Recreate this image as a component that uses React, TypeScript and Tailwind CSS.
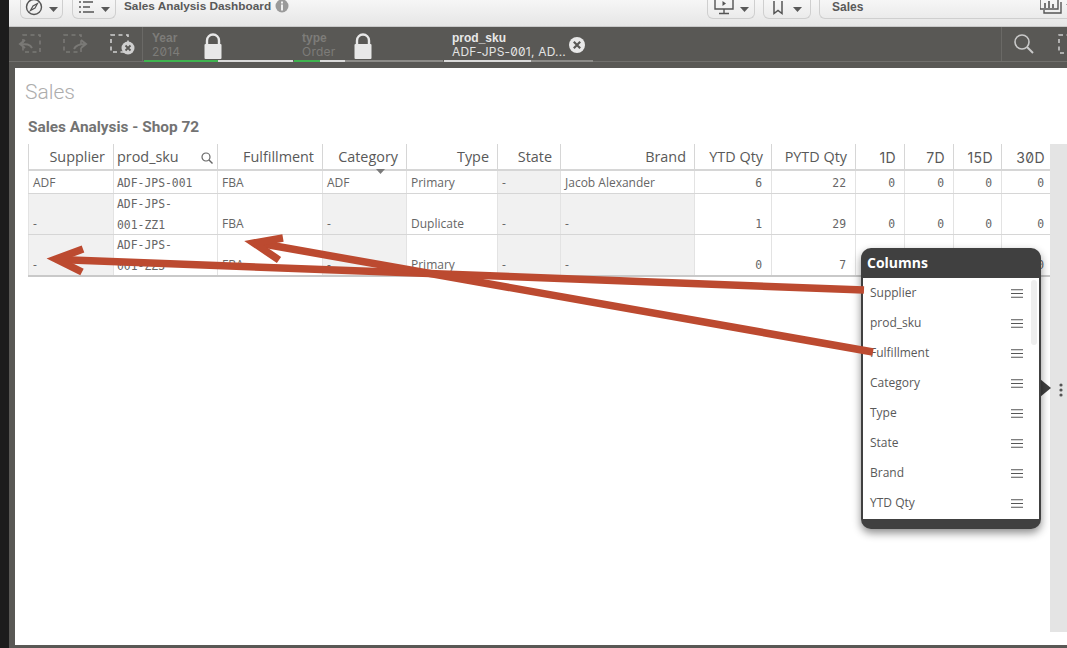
import React from "react";

const gridCols = "grid grid-cols-[85px_104px_105px_84px_91px_63px_134px_77px_84px_49px_49px_48px_48px] grid-rows-[minmax(0,1fr)]";
const headers = ["Supplier", "prod_sku", "Fulfillment", "Category", "Type", "State", "Brand", "YTD Qty", "PYTD Qty", "1D", "7D", "15D", "30D"];
const mono = "font-['DejaVu_Sans_Mono',monospace] text-[11.4px]";

type Row = { h: string; cells: string[] };
const rows: Row[] = [
  { h: "h-[23px]", cells: ["ADF", "ADF-JPS-001", "FBA", "ADF", "Primary", "-", "Jacob Alexander", "6", "22", "0", "0", "0", "0"] },
  { h: "h-[41px]", cells: ["-", "ADF-JPS-\n001-ZZ1", "FBA", "-", "Duplicate", "-", "-", "1", "29", "0", "0", "0", "0"] },
  { h: "h-[42px]", cells: ["-", "ADF-JPS-\n001-ZZ3", "FBA", "-", "Primary", "-", "-", "0", "7", "0", "0", "0", "0"] },
];

function Chevron({ className = "" }: { className?: string }) {
  return <svg width="9" height="5" viewBox="0 0 9 5" className={className}><path d="M0 0h9L4.5 5z" fill="#595959" /></svg>;
}

function Lock() {
  return (
    <svg width="18" height="27" viewBox="0 0 18 27" className="shrink-0">
      <path d="M3 12V7.5a6 6 0 0 1 12 0V12" fill="none" stroke="#e8e8e8" strokeWidth="2.4" />
      <rect x="0.5" y="11" width="17" height="15" rx="1" fill="#e8e8e8" />
    </svg>
  );
}

function Tile({ title, value, active, bar }: { title: string; value: string; active?: boolean; bar: [number, number] }) {
  return (
    <div className="relative w-[149px] h-[35px] shrink-0 ml-px pl-[8px] flex bg-[#595855]">
      <div className="w-[62px] pt-[4px] leading-[14px] text-[12px] overflow-hidden">
        <div className={`font-['Liberation_Sans',sans-serif] font-bold whitespace-nowrap ${active ? "text-[#e8e8e8]" : "text-[#7d7c79]"}`}>{title}</div>
      </div>
      <div className="flex h-[2px] absolute left-0 right-0 bottom-0 bg-[#8c8b88]">
        <div className="bg-[#3fb34f]" style={{ width: bar[0] }} />
        <div className="bg-[#d9d9d9]" style={{ width: bar[1] }} />
      </div>
      <div className={`absolute left-[8px] top-[18px] leading-[14px] text-[12px] tracking-[0.2px] slashed-zero font-['Inter',sans-serif] whitespace-nowrap ${active ? "text-[#e3e3e3]" : "text-[#7d7c79]"}`}>{value}</div>
      {active ? (
        <svg width="18" height="18" viewBox="0 0 18 18" className="absolute right-[7px] top-[9px]">
          <circle cx="9" cy="9" r="8" fill="#e8e8e8" />
          <path d="M5.8 5.8l6.4 6.4M12.2 5.8l-6.4 6.4" stroke="#595855" strokeWidth="2.2" />
        </svg>
      ) : (
        <div className="absolute left-[60px] top-[6px]"><Lock /></div>
      )}
    </div>
  );
}

function ToolButton({ children, className = "" }: { children: React.ReactNode; className?: string }) {
  return (
    <div className={`h-[19px] flex items-center justify-center gap-[6px] border border-t-0 border-[#cfcfcf] rounded-b-[6px] ${className}`}>
      {children}
    </div>
  );
}

function Hamburger() {
  return (
    <svg width="12" height="9" viewBox="0 0 12 9" className="shrink-0">
      <path d="M0 .75h12M0 4.5h12M0 8.25h12" stroke="#555" strokeWidth="1.1" />
    </svg>
  );
}

function Popover() {
  const items = headers.slice(0, 8);
  return (
    <div className="absolute left-[846px] top-[180px] w-[180px] z-10">
      <div className="w-[180px] h-[281px] rounded-[10px] bg-[#404040] shadow-[0_4px_8px_rgba(0,0,0,0.45)] px-[2px] flex flex-col">
        <div className="h-[30px] pl-[4px] pb-[2px] flex items-center text-white font-bold text-[14px] font-['Open_Sans',sans-serif]">Columns</div>
        <div className="relative h-[241px] bg-white overflow-hidden">
          <div className="absolute right-[2px] top-[2px] w-[6px] h-[65px] rounded-[3px] bg-[#eeeeee]" />
          {items.map((t) => (
            <div key={t} className="h-[30px] pl-[7px] pr-[16px] flex items-center justify-between text-[12px] text-[#595959] font-['Open_Sans',sans-serif]">
              <span>{t}</span>
              <Hamburger />
            </div>
          ))}
        </div>
      </div>
    </div>
  );
}

export default function App() {
  return (
    <div className="relative w-[1067px] h-[648px] overflow-hidden flex bg-[#1c1c1c] font-['Open_Sans',sans-serif]">
      <div className="w-[9px] shrink-0" />
      <div className="flex-1 flex flex-col min-w-0 bg-[#595855]">
        {/* top toolbar */}
        <div className="h-[27px] shrink-0 bg-gradient-to-b from-[#f6f6f6] to-[#e6e6e6] border-b border-[#c9c9c9] flex items-start overflow-hidden">
          <ToolButton className="ml-[11px] w-[43px]">
            <svg width="18" height="18" viewBox="0 0 18 18" className="-mt-[5px]">
              <circle cx="9" cy="9" r="7.5" fill="none" stroke="#555" strokeWidth="1.4" />
              <path d="M12.5 5.5L10 10l-4.5 2.5L8 8z" fill="none" stroke="#555" strokeWidth="1.2" />
            </svg>
            <Chevron />
          </ToolButton>
          <ToolButton className="ml-[9px] w-[44px]">
            <svg width="16" height="14" viewBox="0 0 16 14" className="-mt-[4px]">
              <path d="M0 2h2M4 2h10M0 7h2M4 7h7M0 12h2M4 12h11" stroke="#555" strokeWidth="1.6" />
            </svg>
            <Chevron />
          </ToolButton>
          <div className="ml-[8px] -mt-[1px] h-[14px] leading-[14px] text-[11.8px] font-bold text-[#595959] font-['Liberation_Sans',sans-serif] whitespace-nowrap">Sales Analysis Dashboard</div>
          <svg width="14" height="14" viewBox="0 0 14 14" className="ml-[4px] -mt-[1px]">
            <circle cx="7" cy="7" r="6.5" fill="#9a9a9a" />
            <rect x="6" y="5.5" width="2" height="6" fill="#f0f0f0" />
            <rect x="6" y="2.5" width="2" height="2" fill="#f0f0f0" />
          </svg>
          <ToolButton className="ml-[418px] w-[48px]">
            <svg width="20" height="19" viewBox="0 0 20 19" className="-mt-[6px]">
              <path d="M1 1h18v11H1zM10 12v4M5 16.5h10" fill="none" stroke="#555" strokeWidth="1.4" />
              <path d="M8.5 4l3.5 2.5L8.5 9z" fill="#555" />
            </svg>
            <Chevron />
          </ToolButton>
          <ToolButton className="ml-[8px] w-[48px]">
            <svg width="12" height="14" viewBox="0 0 12 14" className="-mt-[3px]">
              <path d="M2 0v12.5l4-3 4 3V0" fill="none" stroke="#555" strokeWidth="1.5" />
            </svg>
            <Chevron className="ml-[3px]" />
          </ToolButton>
          <ToolButton className="ml-[8px] flex-1 !justify-between !border-r-0 !rounded-br-none pl-[12px]">
            <span className="text-[12px] font-bold text-[#595959] font-['Liberation_Sans',sans-serif] -mt-[4px]">Sales</span>
            <div className="flex items-center -mt-[6px] -mr-[8px] gap-[2px]">
              <svg width="24" height="15" viewBox="0 0 24 15">
                <path d="M0 0v10h18V0M4 11v3h17V3" fill="none" stroke="#555" strokeWidth="1.4" />
                <path d="M5 9V4M9 9V2M13 9V5" stroke="#555" strokeWidth="1.6" />
              </svg>
              <Chevron />
            </div>
          </ToolButton>
        </div>

        {/* selection bar */}
        <div className="h-[35px] shrink-0 flex border-b border-[#706f6c]">
          <div className="w-[134px] shrink-0 flex items-center pl-[8px] gap-[24px] border-r border-[#6a6966]">
            <svg width="26" height="22" viewBox="0 0 26 22">
              <rect x="6" y="2" width="17" height="17" fill="none" stroke="#7a7976" strokeWidth="1.6" strokeDasharray="4 3.5" />
              <path d="M15 15c-2-4-6-4-11-4m4-4l-5 4 5 4" fill="none" stroke="#7a7976" strokeWidth="2" />
            </svg>
            <svg width="26" height="22" viewBox="0 0 26 22" className="-ml-[4px]">
              <rect x="1" y="2" width="17" height="17" fill="none" stroke="#7a7976" strokeWidth="1.6" strokeDasharray="4 3.5" />
              <path d="M11 16c2-4 6-5 11-5m-4-4l5 4-5 4" fill="none" stroke="#7a7976" strokeWidth="2" />
            </svg>
            <svg width="25" height="22" viewBox="0 0 25 22" className="-ml-[3px]">
              <rect x="1" y="2" width="17" height="17" fill="none" stroke="#d0d0d0" strokeWidth="1.6" strokeDasharray="4 3.5" />
              <circle cx="18" cy="15" r="6.5" fill="#d0d0d0" />
              <path d="M15.5 12.5l5 5M20.5 12.5l-5 5" stroke="#595855" strokeWidth="1.8" />
            </svg>
          </div>
          <Tile title="Year" value="2014" bar={[74, 75]} />
          <Tile title="type" value="Order" bar={[26, 25]} />
          <Tile title="prod_sku" value="ADF-JPS-001, AD..." active bar={[0, 87]} />
          <div className="flex-1" />
          <div className="w-[66px] shrink-0 border-l border-[#6a6966] flex items-center pl-[11px] gap-[23px] overflow-hidden">
            <svg width="22" height="22" viewBox="0 0 22 22" className="shrink-0">
              <circle cx="9" cy="9" r="7" fill="none" stroke="#c9c9c9" strokeWidth="1.6" />
              <path d="M14 14l6 6" stroke="#c9c9c9" strokeWidth="2" />
            </svg>
            <svg width="16" height="20" viewBox="0 0 16 20" className="shrink-0">
              <rect x="1" y="1" width="16" height="18" fill="none" stroke="#c9c9c9" strokeWidth="1.6" strokeDasharray="4 3.5" />
            </svg>
          </div>
        </div>
        <div className="h-[6px] shrink-0" />

        {/* sheet */}
        <div className="relative flex-1 ml-[6px] mb-[3px] bg-white flex flex-col">
          <div className="pl-[10px] pt-[12px] h-[45px] text-[21px] leading-[25px] text-[#adadad] font-['Roboto',sans-serif] font-light">Sales</div>
          <div className="pl-[13px] pt-[4px] h-[31px] text-[15.4px] leading-[20px] font-bold text-[#737373] font-['Roboto',sans-serif] whitespace-nowrap">Sales Analysis - Shop 72</div>
          <div className="flex flex-1 items-start pl-[13px]">
            <div className="w-[1022px] shrink-0">
              <div className={`${gridCols} h-[27px] border-b-2 border-[#d6d6d6]`}>
                {headers.map((h, i) => (
                  <div key={h} className={`relative flex items-center pt-[1px] border-l border-[#d6d6d6] text-[14.4px] text-[#595959] ${i === 12 ? "pr-[4px]" : "pr-[8px]"} ${i === 1 ? "justify-start pl-[3px]" : "justify-end"} ${i >= 9 ? "font-['Inter',sans-serif] !text-[14px] slashed-zero tracking-[0.4px]" : ""}`}>
                    <span className="whitespace-nowrap">{h}</span>
                    {i === 1 && (
                      <svg width="12" height="12" viewBox="0 0 12 12" className="absolute right-[4px] top-[8px]">
                        <circle cx="5" cy="5" r="4" fill="none" stroke="#666" strokeWidth="1.2" />
                        <path d="M8 8l3.5 3.5" stroke="#666" strokeWidth="1.4" />
                      </svg>
                    )}
                    {i === 3 && (
                      <svg width="9" height="5" viewBox="0 0 9 5" className="absolute right-[21px] -bottom-[5px]"><path d="M0 0h9L4.5 5z" fill="#7a7a7a" /></svg>
                    )}
                  </div>
                ))}
              </div>
              {rows.map((r, ri) => (
                <div key={ri} className={`${gridCols} ${r.h} ${ri === 2 ? "border-b-2 border-[#c9c9c9]" : "border-b border-[#d6d6d6]"}`}>
                  {r.cells.map((c, i) => {
                    const isMono = i === 1 || i >= 7;
                    const dash = c === "-";
                    const twoLine = c.includes("\n");
                    return (
                      <div key={i} className={`flex items-end min-h-0 border-l border-[#e3e3e3] ${dash ? "bg-[#f1f1f1]" : ""} ${i === 12 ? "justify-end pr-[5px]" : i >= 7 ? "justify-end pr-[9px]" : i === 1 ? "pl-[3px]" : "pl-[4px]"} text-[#666] ${isMono ? mono : "text-[12px]"}`}>
                        <span className={`whitespace-pre-line leading-[21px] ${twoLine ? "-mb-[2px]" : isMono ? "-mb-[1px]" : ""}`}>{c}</span>
                      </div>
                    );
                  })}
                </div>
              ))}
            </div>
          </div>
          {/* right strip */}
          <div className="absolute left-[1035px] top-[76px] w-[17px] h-[488px] bg-[#e4e4e4] flex items-center justify-center pl-[4px] pt-[4px]">
            <svg width="4" height="14" viewBox="0 0 4 14">
              <circle cx="2" cy="2" r="1.6" fill="#555" />
              <circle cx="2" cy="7" r="1.6" fill="#555" />
              <circle cx="2" cy="12" r="1.6" fill="#555" />
            </svg>
          </div>
          <svg width="11" height="18" viewBox="0 0 11 18" className="absolute left-[1025px] top-[311px]"><path d="M0 0l11 9-11 9z" fill="#404040" /></svg>
          <Popover />
        </div>
      </div>

      {/* annotation arrows */}
      <svg width="1067" height="648" viewBox="0 0 1067 648" className="absolute inset-0 z-20 pointer-events-none">
        <g fill="none" stroke="#bc4a30" strokeWidth="7.5">
          <path d="M864 290L58 259.5" />
          <path d="M83 249L56 259l26 13" />
          <path d="M873 352L258 243" />
          <path d="M283 238L254 243l25 17" />
        </g>
      </svg>
    </div>
  );
}
